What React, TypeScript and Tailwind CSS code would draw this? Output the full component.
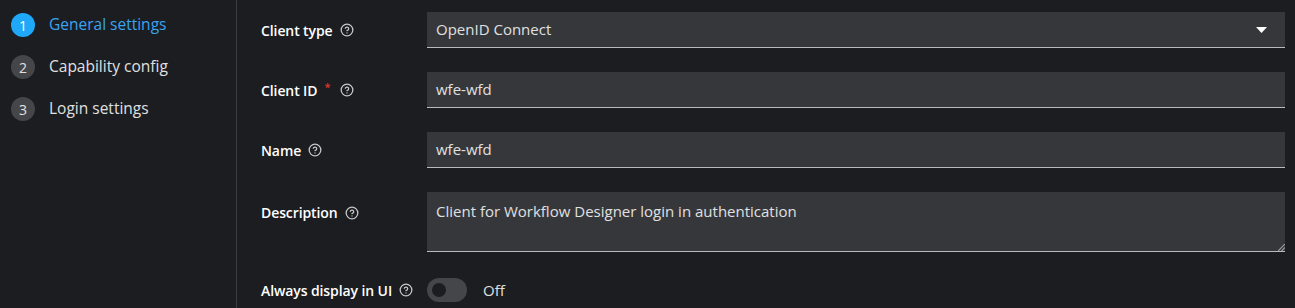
import { CircleHelp } from "lucide-react";

const steps = [
  { n: 1, label: "General settings", current: true },
  { n: 2, label: "Capability config", current: false },
  { n: 3, label: "Login settings", current: false },
];

const Help = () => <CircleHelp className="w-[14px] h-[14px] text-[#c7c7c7]" strokeWidth={2.2} />;

const Label = ({ text, required }: { text: string; required?: boolean }) => (
  <div className="flex items-center gap-[7px] text-[14px] font-semibold tracking-[-0.1px] text-white">
    <span>{text}</span>
    {required && <span className="text-[#e2352b] text-[11px] -mt-[6px] mr-[3px]">*</span>}
    <Help />
  </div>
);

export default function App() {
  return (
    <div className="flex w-[1295px] h-[308px] overflow-hidden bg-[#1b1d21] text-[#e0e0e0]" style={{ fontFamily: '"Open Sans", "Liberation Sans", sans-serif' }}>
      <nav className="w-[237px] shrink-0 border-r border-[#3c3f42] pl-[11px] pt-[13px]">
        <ol className="flex flex-col gap-[18px]">
          {steps.map(s => (
            <li key={s.n} className="flex items-center gap-[14px] h-[24px]">
              <span className={(s.current ? "bg-[#1fa7f8] text-white" : "bg-[#45464a] text-[#e0e0e0]") + " w-[24px] h-[24px] rounded-full flex items-center justify-center text-[14px]"}>{s.n}</span>
              <span className={(s.current ? "text-[#3aa3f0]" : "text-[#e0e0e0]") + " text-[15.5px]"}>{s.label}</span>
            </li>
          ))}
        </ol>
      </nav>
      <main className="flex-1 pl-[24px] pr-[10px] pt-[12px] flex flex-col gap-[24px]">
        <div className="flex items-center">
          <div className="w-[166px]"><Label text="Client type" /></div>
          <div className="flex-1 h-[36px] bg-[#36373b] border-b border-[#b8bbbe] flex items-center justify-between pl-[9px] pr-[18px] text-[15px]">
            <span>OpenID Connect</span>
            <svg width="11" height="6" viewBox="0 0 11 6"><path d="M0 0h11L5.5 6z" fill="#ffffff" /></svg>
          </div>
        </div>
        <div className="flex items-center">
          <div className="w-[166px]"><Label text="Client ID" required /></div>
          <div className="flex-1 h-[36px] bg-[#36373b] border-b border-[#b8bbbe] flex items-center pl-[9px] text-[15px]">wfe-wfd</div>
        </div>
        <div className="flex items-center">
          <div className="w-[166px]"><Label text="Name" /></div>
          <div className="flex-1 h-[36px] bg-[#36373b] border-b border-[#b8bbbe] flex items-center pl-[9px] text-[15px]">wfe-wfd</div>
        </div>
        <div className="flex items-start">
          <div className="w-[166px] pt-[10px]"><Label text="Description" /></div>
          <div className="relative flex-1 h-[60px] bg-[#36373b] border-b border-[#b8bbbe] pl-[9px] pt-[8px] text-[15px]">
            Client for Workflow Designer login in authentication
            <svg className="absolute right-0 bottom-0" width="7" height="7" viewBox="0 0 7 7"><path d="M7 0L0 7M7 3.5L3.5 7" stroke="#9a9a9a" strokeWidth="1.2" /></svg>
          </div>
        </div>
        <div className="flex items-center mt-[2px]">
          <div className="w-[166px]"><Label text="Always display in UI" /></div>
          <div className="flex items-center gap-[16px]">
            <span className="w-[40px] h-[24px] rounded-full bg-[#45464a] flex items-center pl-[5px]">
              <span className="w-[14px] h-[14px] rounded-full bg-[#1b1d21]" />
            </span>
            <span className="text-[15px]">Off</span>
          </div>
        </div>
      </main>
    </div>
  );
}
